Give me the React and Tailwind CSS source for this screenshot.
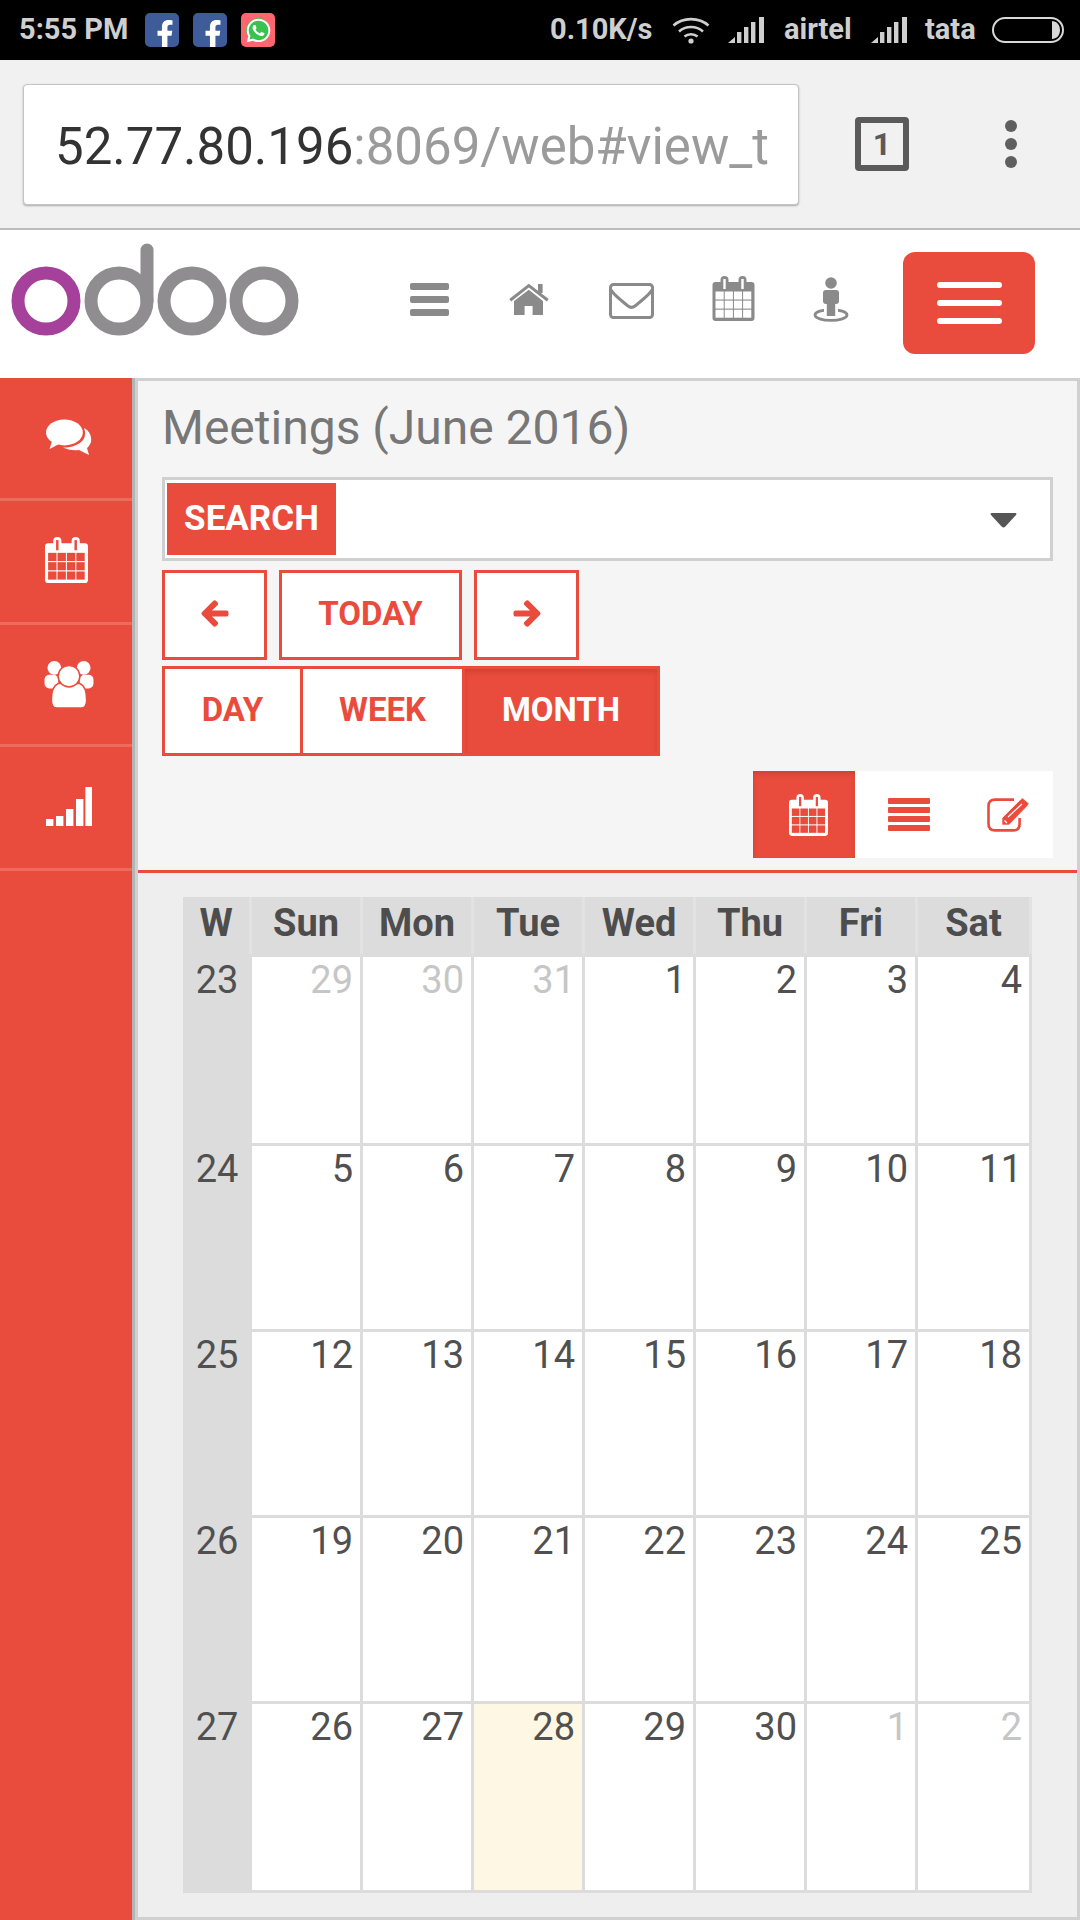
import React from 'react';
import { FaArrowLeft, FaArrowRight, FaFacebookF, FaWhatsapp } from 'react-icons/fa';

const WEEKS = [
    { w: 23, days: [[29, 'muted'], [30, 'muted'], [31, 'muted'], [1], [2], [3], [4]] },
    { w: 24, days: [[5], [6], [7], [8], [9], [10], [11]] },
    { w: 25, days: [[12], [13], [14], [15], [16], [17], [18]] },
    { w: 26, days: [[19], [20], [21], [22], [23], [24], [25]] },
    { w: 27, days: [[26], [27], [28, 'today'], [29], [30], [1, 'muted'], [2, 'muted']] },
];

const DAY_NAMES = ['Sun', 'Mon', 'Tue', 'Wed', 'Thu', 'Fri', 'Sat'];

function CalendarIcon({ className, hole }) {
    const cols = [3, 12.2, 21.4, 30.6];
    const rows = [15.5, 24.6, 33.7];
    return (
        <svg viewBox="0 0 42 45" className={className} fill="currentColor">
            <rect x="0" y="6" width="42" height="39" rx="3" />
            <rect x="8" y="0" width="8" height="15" rx="4" />
            <rect x="26" y="0" width="8" height="15" rx="4" />
            <rect x="10.8" y="3" width="2.4" height="10" fill={hole} />
            <rect x="28.8" y="3" width="2.4" height="10" fill={hole} />
            {rows.map((y) =>
                cols.map((x) => <rect key={`${x}-${y}`} x={x} y={y} width="8.2" height="8" fill={hole} />)
            )}
        </svg>
    );
}

function HomeIcon({ className }) {
    return (
        <svg viewBox="0 0 40 32" className={className} fill="currentColor">
            <path d="M1.2 17.2L19.8 2.6L38.8 17.2" fill="none" stroke="currentColor" strokeWidth="3" />
            <path d="M5 18L19.8 6.8L34 18V32H23.6V23H15.6V32H5Z" />
            <rect x="29" y="1" width="4.6" height="9" />
        </svg>
    );
}

function EnvelopeIcon({ className }) {
    return (
        <svg viewBox="0 0 45 36" className={className} fill="none" stroke="currentColor">
            <rect x="1.5" y="1.5" width="42" height="33" rx="3" strokeWidth="3" />
            <path d="M2 7C4 11 14 19 19 23C21 24.6 24 24.6 26 23C31 19 41 11 43 7" strokeWidth="3" />
        </svg>
    );
}

function StreetViewIcon({ className }) {
    return (
        <svg viewBox="0 0 36 45" className={className} fill="currentColor">
            <ellipse cx="18" cy="38" rx="16" ry="5.4" fill="none" stroke="currentColor" strokeWidth="2.8" />
            <rect x="11" y="30" width="14" height="7" fill="#ffffff" />
            <circle cx="18" cy="6" r="5.8" />
            <rect x="10" y="13" width="16" height="14" rx="3" />
            <rect x="13.8" y="20" width="8.4" height="19" />
        </svg>
    );
}

function CommentsIcon({ className }) {
    return (
        <svg viewBox="0 0 46 38" className={className} fill="currentColor">
            <ellipse cx="18.4" cy="13.4" rx="18.4" ry="13" />
            <path d="M6 22L3.6 30L13 25Z" />
            <path d="M38 9C44 12 46 18 45 23C44 26 42.6 27.6 41 29L43 36L33 31C27 31.6 21 30.6 17 28.6C27 28.6 35 25 38 19.5C39.5 16 39.5 12.6 38 9Z" />
        </svg>
    );
}

function UsersIcon({ className, halo }) {
    return (
        <svg viewBox="0 0 50 48" className={className} fill="currentColor">
            <circle cx="10" cy="7" r="7" />
            <circle cx="40" cy="7" r="7" />
            <rect x="0" y="14" width="14" height="14" rx="5" />
            <rect x="36" y="14" width="14" height="14" rx="5" />
            <path d="M7 40C7 30 9 25 14 23H36C41 25 43 30 43 40C43 45 41 48 37 48H13C9 48 7 45 7 40Z" stroke={halo} strokeWidth="1.5" />
            <circle cx="25" cy="15.5" r="11" stroke={halo} strokeWidth="1.5" />
        </svg>
    );
}

function SignalBarsIcon({ className }) {
    return (
        <svg viewBox="0 0 46 39" className={className} fill="currentColor">
            <rect x="0" y="32" width="7.4" height="7" />
            <rect x="10" y="29" width="7.4" height="10" />
            <rect x="20" y="22" width="7.4" height="17" />
            <rect x="30" y="12" width="7.4" height="27" />
            <rect x="39.4" y="0" width="6.6" height="39" />
        </svg>
    );
}

function EditIcon({ className }) {
    return (
        <svg viewBox="0 0 42 34" className={className} fill="currentColor">
            <path d="M27 1.6H8Q1.5 1.6 1.5 8V26Q1.5 32.4 8 32.4H26Q32.6 32.4 32.6 26V20" fill="none" stroke="currentColor" strokeWidth="2.6" />
            <path d="M15 27V20L33 2L35.5 0L42 5.500L40.500 8L22 27Z" stroke="#ffffff" strokeWidth="0.6" />
            <path d="M17.500 22.500L20 25M21 19L35 6" fill="none" stroke="#ffffff" strokeWidth="1.2" />
        </svg>
    );
}

function WifiIcon() {
    return (
        <svg viewBox="0 0 38 28" className="w-[38px] h-[28px] text-[#cfcfcf]" fill="none" stroke="currentColor" strokeWidth="2.6">
            <path d="M1.500 9.500C11 1 27 1 36.500 9.500" />
            <path d="M7 15.500C13.500 9.500 24.500 9.500 31 15.500" />
            <path d="M12.500 20.500C16 17.400 22 17.400 25.500 20.500" />
            <circle cx="19" cy="25" r="2.6" fill="currentColor" stroke="none" />
        </svg>
    );
}

function CellIcon() {
    return (
        <svg viewBox="0 0 37 26" className="w-[37px] h-[26px] text-[#cfcfcf]" fill="currentColor">
            <path d="M0 26L7 20V26Z" />
            <rect x="9" y="15" width="4.4" height="11" />
            <rect x="16" y="10" width="4.4" height="16" />
            <rect x="23" y="5" width="4.4" height="21" />
            <rect x="31" y="0" width="5" height="26" />
        </svg>
    );
}

function BatteryIcon() {
    return (
        <svg viewBox="0 0 72 26" className="w-[72px] h-[26px] text-[#d8d8d8]">
            <rect x="1" y="1" width="70" height="24" rx="12" fill="none" stroke="currentColor" strokeWidth="2" />
            <path d="M60 4H59.500C65 4 68 8 68 13C68 18 65 22 59.500 22H60Z" fill="currentColor" />
        </svg>
    );
}

function FacebookBadge() {
    return (
        <div className="w-[34px] h-[34px] rounded-[5px] bg-[#3f5c9a] overflow-hidden flex justify-center items-end pl-[5px]">
            <FaFacebookF className="w-[26px] h-[28px] text-white shrink-0 -mb-[1px]" />
        </div>
    );
}

function WhatsappBadge() {
    return (
        <div className="w-[34px] h-[34px] rounded-[5px] bg-[#ff6670] flex items-center justify-center">
            <div className="w-[24px] h-[24px] rounded-full bg-[#3ac24f] flex items-center justify-center">
                <FaWhatsapp className="w-[27px] h-[27px] text-white shrink-0" />
            </div>
        </div>
    );
}

function StatusBar() {
    return (
        <div className="h-[60px] bg-black flex items-center text-[#cfcfcf] font-bold text-[29px]">
            <span className="ml-[19px] w-[126px]">5:55 PM</span>
            <div className="flex gap-[14px]">
                <FacebookBadge />
                <FacebookBadge />
                <WhatsappBadge />
            </div>
            <span className="ml-[275px] w-[122px]">0.10K/s</span>
            <WifiIcon />
            <div className="ml-[18px]"><CellIcon /></div>
            <span className="ml-[19px] w-[87px]">airtel</span>
            <CellIcon />
            <span className="ml-[17px] w-[67px]">tata</span>
            <BatteryIcon />
        </div>
    );
}

function BrowserBar() {
    return (
        <div className="h-[170px] bg-[#f1f1f1] border-b-2 border-[#bcbcbc] flex items-center pl-[23px]">
            <div className="w-[776px] h-[121px] bg-white rounded-[4px] border border-[#c4c4c4] shadow-[0_1px_2px_rgba(0,0,0,0.3)] flex items-center pl-[31px] pt-[6px] overflow-hidden whitespace-nowrap text-[51px] text-[#9b9b9b]">
                <span className="text-[#333333]">52.77.80.196</span>
                <span>:8069/web#view_t</span>
            </div>
            <div className="ml-[56px] w-[54px] h-[54px] border-[6px] border-[#5a5a5a] rounded-[4px] flex items-center justify-center text-[#5a5a5a] font-bold text-[32px]">
                1
            </div>
            <div className="ml-[96px] flex flex-col gap-[6px]">
                <div className="w-[12px] h-[12px] rounded-full bg-[#5f5f5f]" />
                <div className="w-[12px] h-[12px] rounded-full bg-[#5f5f5f]" />
                <div className="w-[12px] h-[12px] rounded-full bg-[#5f5f5f]" />
            </div>
        </div>
    );
}

function OdooLogo() {
    return (
        <svg viewBox="0 0 290 95" className="w-[290px] h-[95px]" fill="none" strokeWidth="13">
            <circle cx="35" cy="59" r="28" stroke="#a5409b" />
            <circle cx="108" cy="59" r="28" stroke="#8f8d90" />
            <path d="M136 59V8" stroke="#8f8d90" strokeLinecap="round" />
            <circle cx="181" cy="59" r="28" stroke="#8f8d90" />
            <circle cx="253" cy="59" r="28" stroke="#8f8d90" />
        </svg>
    );
}

function AppHeader() {
    return (
        <div className="h-[148px] bg-white flex items-start text-[#8a8a8a]">
            <div className="ml-[11px] mt-[12px]"><OdooLogo /></div>
            <div className="ml-[109px] mt-[53px] w-[39px] flex flex-col gap-[6px]">
                <div className="h-[7px] rounded-[2px] bg-[#8a8a8a]" />
                <div className="h-[7px] rounded-[2px] bg-[#8a8a8a]" />
                <div className="h-[7px] rounded-[2px] bg-[#8a8a8a]" />
            </div>
            <HomeIcon className="ml-[60px] mt-[53px] w-[40px] h-[32px]" />
            <EnvelopeIcon className="ml-[60px] mt-[53px] w-[45px] h-[36px]" />
            <CalendarIcon className="ml-[58px] mt-[46px] w-[43px] h-[45px]" hole="#ffffff" />
            <StreetViewIcon className="ml-[58px] mt-[47px] w-[36px] h-[45px]" />
            <div className="ml-[54px] mt-[22px] w-[132px] h-[102px] rounded-[12px] bg-[#e94c3d] flex flex-col items-center justify-center gap-[12px]">
                <div className="w-[65px] h-[6px] rounded-full bg-white" />
                <div className="w-[65px] h-[6px] rounded-full bg-white" />
                <div className="w-[65px] h-[6px] rounded-full bg-white" />
            </div>
        </div>
    );
}

function Sidebar() {
    return (
        <div className="w-[135px] border-r-[3px] border-[#b4b4b4] bg-[#e94c3d] text-white flex flex-col shrink-0">
            <div className="h-[123px] pl-[5px] border-b-[3px] border-[#ed6a5d] flex items-center justify-center">
                <CommentsIcon className="w-[46px] h-[38px]" />
            </div>
            <div className="h-[124px] pl-[1px] pb-[4px] border-b-[3px] border-[#ed6a5d] flex items-center justify-center">
                <CalendarIcon className="w-[43px] h-[46px]" hole="#e94c3d" />
            </div>
            <div className="h-[122px] pl-[5px] border-b-[3px] border-[#ed6a5d] flex items-center justify-center">
                <UsersIcon className="w-[50px] h-[47px]" halo="#e94c3d" />
            </div>
            <div className="h-[124px] pl-[5px] pb-[3px] border-b-[3px] border-[#ed6a5d] flex items-center justify-center">
                <SignalBarsIcon className="w-[46px] h-[39px]" />
            </div>
        </div>
    );
}

function Toolbar() {
    const button = 'h-[90px] pb-[3px] border-[3px] border-[#e94c3d] bg-white text-[#e94c3d] font-bold text-[33px] flex items-center justify-center';
    return (
        <div className="bg-[#f5f5f5] h-[489px] pl-[24px] pr-[24px] flex flex-col">
            <h1 className="mt-[18px] h-[58px] text-[48px] leading-[58px] text-[#777777] font-normal">Meetings (June 2016)</h1>
            <div className="mt-[20px] h-[84px] border-[3px] border-[#d0d0d0] bg-white flex items-center pl-[2px] pr-[32px]">
                <div className="w-[169px] h-[72px] bg-[#e94c3d] text-white font-bold text-[35px] flex items-center justify-center">SEARCH</div>
                <svg viewBox="0 0 32 18" className="ml-auto mt-[3px] w-[29px] h-[15px] text-[#555555]" fill="currentColor">
                    <path d="M2 0H30Q32.500 0 31 2.400L18 16.500Q16 18.500 14 16.500L1 2.400Q-0.500 0 2 0Z" />
                </svg>
            </div>
            <div className="mt-[9px] flex gap-[12px]">
                <div className={`${button} w-[105px]`}><FaArrowLeft className="w-[28px] h-[29px]" stroke="currentColor" strokeWidth={30} /></div>
                <div className={`${button} w-[183px]`}>TODAY</div>
                <div className={`${button} w-[105px]`}><FaArrowRight className="w-[28px] h-[29px]" stroke="currentColor" strokeWidth={30} /></div>
            </div>
            <div className="mt-[6px] flex">
                <div className={`${button} w-[141px]`}>DAY</div>
                <div className={`${button} w-[165px] -ml-[3px]`}>WEEK</div>
                <div className="h-[90px] pb-[3px] w-[198px] -ml-[3px] border-[3px] border-[#e94c3d] bg-[#e94c3d] shadow-[inset_0_3px_5px_rgba(0,0,0,0.125)] text-white font-bold text-[33px] flex items-center justify-center">MONTH</div>
            </div>
            <div className="mt-[15px] flex justify-end">
                <div className="w-[102px] h-[87px] pl-[8px] bg-[#e94c3d] shadow-[inset_0_3px_5px_rgba(0,0,0,0.125)] flex items-center justify-center text-white">
                    <CalendarIcon className="w-[39px] h-[42px]" hole="#e94c3d" />
                </div>
                <div className="w-[100px] h-[87px] pl-[8px] bg-white flex items-center justify-center">
                    <div className="w-[42px] flex flex-col gap-[3px]">
                        <div className="h-[6px] rounded-[1px] bg-[#e94c3d]" />
                        <div className="h-[6px] rounded-[1px] bg-[#e94c3d]" />
                        <div className="h-[6px] rounded-[1px] bg-[#e94c3d]" />
                        <div className="h-[6px] rounded-[1px] bg-[#e94c3d]" />
                    </div>
                </div>
                <div className="w-[98px] h-[87px] pl-[8px] bg-white flex items-center justify-center text-[#e94c3d]">
                    <EditIcon className="w-[42px] h-[34px]" />
                </div>
            </div>
        </div>
    );
}

function DayCell({ day, kind }) {
    const tone = kind === 'muted' ? 'text-[#c6c6c6]' : 'text-[#505050]';
    const bg = kind === 'today' ? 'bg-[#fdf7e3]' : 'bg-white';
    return <div className={`${bg} ${tone} text-right pr-[7px] pt-[1px] text-[38px] leading-[44px] font-normal`}>{day}</div>;
}

function MonthGrid() {
    return (
        <div className="grid grid-cols-[66px_repeat(6,108px)_111px] grid-rows-[57px_186px_183px_183px_183px_186px] gap-[3px] pr-[3px] pb-[3px] bg-[#dcdcdc] w-[849px]">
            <div className="bg-[#dcdcdc] shadow-[3px_0_0_#e2e2e2] pb-[4px] text-[#4d4d4d] font-bold text-[38px] flex items-center justify-center">W</div>
            {DAY_NAMES.map((name) => (
                <div key={name} className="bg-[#dcdcdc] shadow-[3px_0_0_#e2e2e2] pb-[4px] text-[#4d4d4d] font-bold text-[38px] flex items-center justify-center">{name}</div>
            ))}
            {WEEKS.map((week) => (
                <React.Fragment key={week.w}>
                    <div className="bg-[#dcdcdc] text-[#505050] pt-[1px] text-[38px] leading-[44px] text-center pl-[2px]">{week.w}</div>
                    {week.days.map(([day, kind], i) => (
                        <DayCell key={i} day={day} kind={kind} />
                    ))}
                </React.Fragment>
            ))}
        </div>
    );
}

export default function App() {
    return (
        <div className="w-[1080px] h-[1920px] overflow-hidden bg-white flex flex-col font-['Roboto',sans-serif]">
            <StatusBar />
            <BrowserBar />
            <AppHeader />
            <div className="flex-1 flex min-h-0">
                <Sidebar />
                <div className="flex-1 border-[3px] border-[#d0d0d0] bg-[#efeeef] flex flex-col">
                    <Toolbar />
                    <div className="border-t-[3px] border-[#e94c3d] pt-[24px] pl-[45px]">
                        <MonthGrid />
                    </div>
                </div>
            </div>
        </div>
    );
}
